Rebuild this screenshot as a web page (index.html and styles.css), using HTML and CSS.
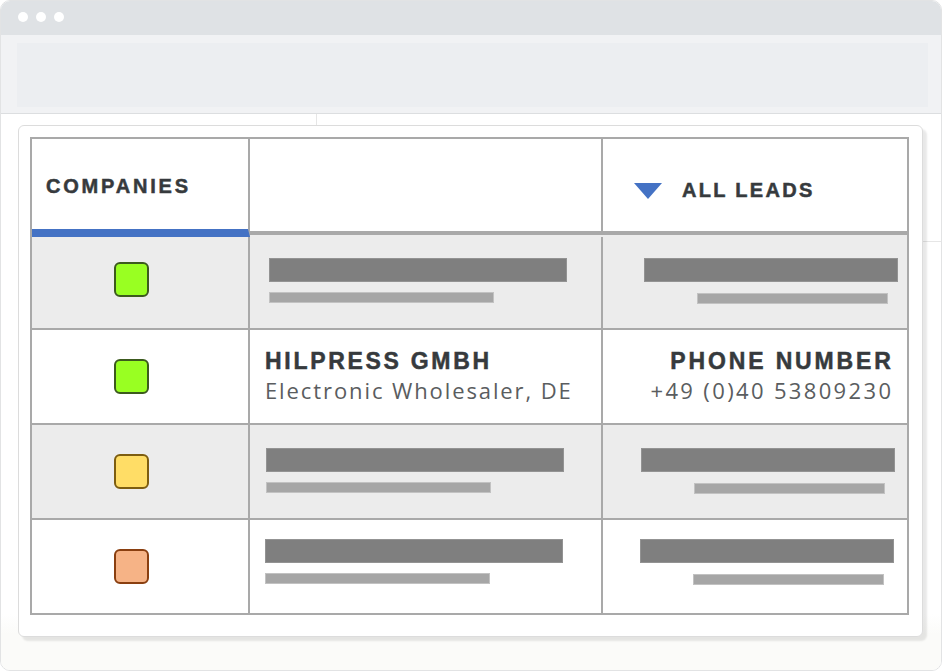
FILE: index.html
```html
<!DOCTYPE html>
<html>
<head>
<meta charset="utf-8">
<link rel="stylesheet" href="styles.css">
</head>
<body>
<div class="window">
  <div class="titlebar">
    <span class="dot"></span><span class="dot"></span><span class="dot"></span>
  </div>
  <div class="toolbar"><div class="urlbar"></div></div>
  <div class="content">
    <div class="backpanel"></div>
    <div class="card">
      <div class="table">
        <div class="row head">
          <div class="cell c1 head-companies"><span class="htext wide">COMPANIES</span></div>
          <div class="cell c2 head-blank"></div>
          <div class="cell c3 head-leads">
            <svg class="tri" width="28" height="16" viewBox="0 0 28 16"><polygon points="0,0 28,0 14,16" fill="#4472c4"/></svg>
            <span class="htext">ALL LEADS</span>
          </div>
        </div>

        <div class="row shaded r1">
          <div class="cell c1 sqcell"><span class="sq green"></span></div>
          <div class="cell c2 bars left"><span class="bar dark"></span><span class="bar light"></span></div>
          <div class="cell c3 bars right"><span class="bar dark"></span><span class="bar light"></span></div>
        </div>

        <div class="row r2">
          <div class="cell c1 sqcell"><span class="sq green"></span></div>
          <div class="cell c2 info">
            <div class="title">HILPRESS GMBH</div>
            <div class="sub">Electronic Wholesaler, DE</div>
          </div>
          <div class="cell c3 info right-info">
            <div class="title">PHONE NUMBER</div>
            <div class="sub phone">+49 (0)40 53809230</div>
          </div>
        </div>

        <div class="row shaded r3">
          <div class="cell c1 sqcell"><span class="sq yellow"></span></div>
          <div class="cell c2 bars left"><span class="bar dark"></span><span class="bar light"></span></div>
          <div class="cell c3 bars right"><span class="bar dark"></span><span class="bar light"></span></div>
        </div>

        <div class="row r4">
          <div class="cell c1 sqcell"><span class="sq orange"></span></div>
          <div class="cell c2 bars left"><span class="bar dark"></span><span class="bar light"></span></div>
          <div class="cell c3 bars right"><span class="bar dark"></span><span class="bar light"></span></div>
        </div>
      </div>
    </div>
  </div>
</div>
</body>
</html>
```
FILE: styles.css
```css
* { box-sizing: border-box; }
html, body { margin: 0; padding: 0; background: #ffffff; }
body { font-family: "Liberation Sans", Arial, sans-serif; }

.window {
  width: 942px;
  height: 671px;
  border: 1px solid #e2e3e4;
  border-radius: 10px;
  overflow: hidden;
  background: #ffffff;
  display: flex;
  flex-direction: column;
}

.titlebar {
  height: 34px;
  background: #dfe2e5;
  display: flex;
  align-items: center;
  gap: 8px;
  padding-left: 17px;
  padding-bottom: 2px;
}
.dot {
  width: 10px;
  height: 10px;
  border-radius: 50%;
  background: #ffffff;
}

.toolbar {
  height: 79px;
  background: #f1f2f4;
  border-bottom: 1px solid #dcdee0;
  padding: 8px 13px 6px 16px;
}
.urlbar {
  height: 64px;
  background: #eceef1;
}

.content {
  position: relative;
  flex: 1;
  padding: 11px 0 0 17px;
  background: linear-gradient(#ffffff 0, #ffffff 500px, #fbfbf9 520px);
}
.backpanel {
  position: absolute;
  left: 315px;
  top: 0;
  right: 0;
  height: 128px;
  background: #ffffff;
  border-left: 1px solid #e6e6e6;
  border-bottom: 1px solid #e6e6e6;
}

.card {
  position: relative;
  width: 905px;
  background: #ffffff;
  border: 1px solid #dcdcdc;
  border-radius: 6px;
  box-shadow: 4px 4px 2px rgba(0, 0, 0, 0.09);
  padding: 11px 13px 21px 11px;
}

.table {
  width: 879px;
  border: 2px solid #a9a9a9;
  display: flex;
  flex-direction: column;
}

.row {
  display: grid;
  grid-template-columns: 218px 353px 304px;
  border-top: 2px solid #a9a9a9;
}
.row.head { border-top: none; background: #ececec; align-items: start; }
.row.shaded { background: #ececec; }
.r1 { height: 91px; border-top: none; }
.r2, .r3, .r4 { height: 95px; }

.cell { min-width: 0; }
.c1, .c2 { border-right: 2px solid #a9a9a9; }

.head .cell { background: #ffffff; }
.head-companies {
  height: 98px;
  border-bottom: 8px solid #4472c4;
  padding: 35px 0 0 14px;
}
.head-blank, .head-leads {
  height: 96px;
  border-bottom: 4px solid #a9a9a9;
}
.head-leads {
  display: flex;
  align-items: flex-start;
  padding: 44px 0 0 31px;
  gap: 20px;
}
.head-leads .htext { margin-top: -5px; }
.htext {
  font-family: "Liberation Sans", Arial, sans-serif;
  font-weight: 700;
  font-size: 20px;
  line-height: 24px;
  letter-spacing: 2.3px;
  color: #363a3d;
  -webkit-text-stroke: 0.5px #363a3d;
  display: block;
}
.htext.wide { letter-spacing: 2.8px; }

.sqcell {
  display: flex;
  align-items: center;
  padding-left: 82px;
}
.r1 .sqcell { padding-bottom: 6px; }
.sq {
  width: 35px;
  height: 35px;
  border-radius: 6px;
  border: 2px solid #333;
  display: block;
}
.sq.green { background: #99ff22; border-color: #3c5a1e; }
.sq.yellow { background: #ffdd66; border-color: #7d5d10; }
.sq.orange { background: #f6b386; border-color: #8a3f10; }

.bars {
  display: flex;
  flex-direction: column;
  gap: 10px;
}
.bar {
  display: block;
  border-style: solid;
  border-width: 1px;
}
.bar.dark { height: 24px; background: #7f7f7f; border-color: #939393; }
.bar.light { height: 11px; background: #a6a6a6; border-color: #c2c2c2; }

.bars.left { padding-left: 16px; }
.bars.left .bar.dark { width: 298px; }
.bars.left .bar.light { width: 225px; }
.bars.right { align-items: flex-end; gap: 11px; }
.bars.right .bar.dark { width: 254px; margin-right: 11px; }
.bars.right .bar.light { width: 191px; margin-right: 21px; }

.r1 .bars { padding-top: 21px; }
.r1 .bars.left { padding-left: 19px; }
.r1 .bars.right .bar.dark { margin-right: 9px; }
.r1 .bars.right .bar.light { margin-right: 19px; }
.r3 .bars { padding-top: 23px; }
.r3 .bars.right .bar.dark { margin-right: 12px; }
.r3 .bars.right .bar.light { margin-right: 22px; }
.r4 .bars { padding-top: 19px; }
.r4 .bars.left { padding-left: 15px; }
.r4 .bars.right .bar.dark { margin-right: 13px; }
.r4 .bars.right .bar.light { margin-right: 23px; }

.info {
  padding: 18px 0 0 15px;
}
.right-info {
  text-align: right;
  padding: 18px 16px 0 0;
}
.title {
  font-family: "Liberation Sans", Arial, sans-serif;
  font-weight: 700;
  font-size: 23px;
  line-height: 26px;
  letter-spacing: 2.7px;
  color: #363a3d;
  -webkit-text-stroke: 0.5px #363a3d;
}
.right-info .title { margin-right: -2.7px; letter-spacing: 2.85px; }
.sub {
  font-family: "Open Sans", "Liberation Sans", sans-serif;
  font-weight: 400;
  font-size: 22px;
  line-height: 26px;
  letter-spacing: 1.9px;
  color: #5a5d60;
  margin-top: 3px;
}
.sub.phone { letter-spacing: 2.35px; margin-right: -2.35px; }
```
